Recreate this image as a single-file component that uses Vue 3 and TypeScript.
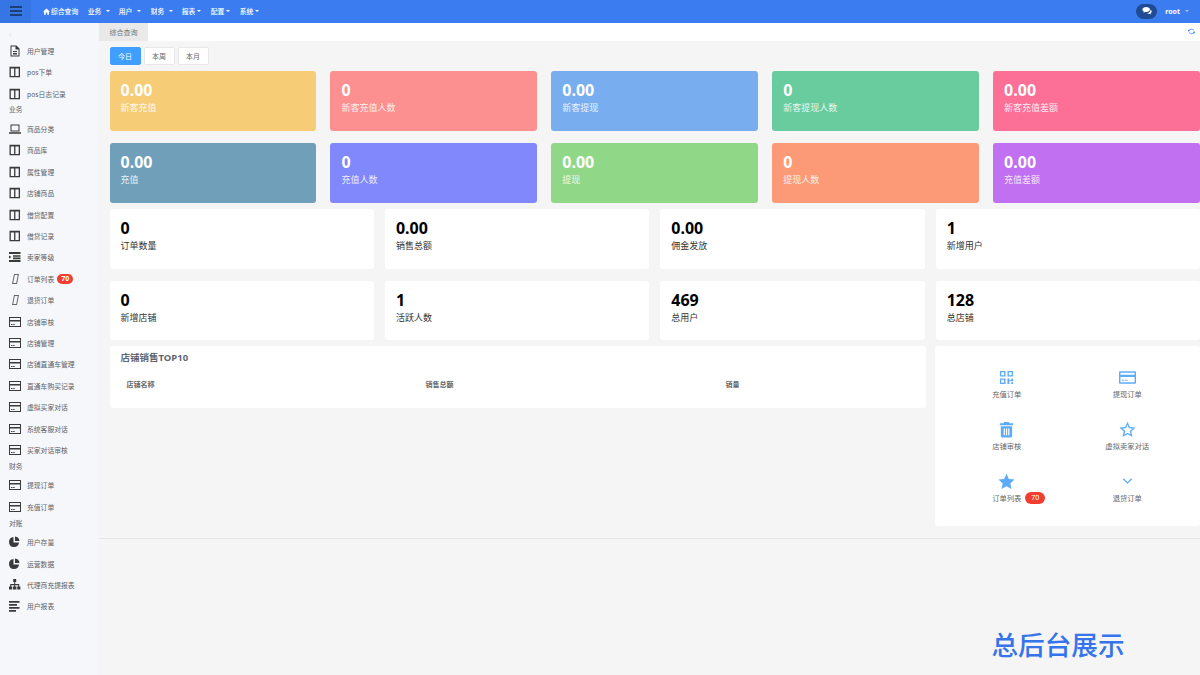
<template>
  <div class="page">
    <header class="topbar">
      <div class="burger">
        <svg width="12" height="10" viewBox="0 0 12 10"><path d="M0 0h12v2H0zM0 4h12v2H0zM0 8h12v2H0z" fill="#1d3f73" /></svg>
      </div>
      <nav class="topnav">
        <span class="nav-link home">
          <svg width="7" height="7" viewBox="0 0 10 10"><path d="M5 .8 0 5.2h1.500V9.500h2.500V6.500h2v3h2.500V5.200H10z" fill="#fff" /></svg>
          综合查询
        </span>
        <span v-for="n in navs" :key="n.label" class="nav-link" :style="{ width: n.width + 'px' }">{{ n.label }}<i class="caret" :style="{ marginLeft: n.caret + 'px' }"></i></span>
      </nav>
      <div class="user">
        <span class="chat">
          <svg width="10" height="8" viewBox="0 0 12 10"><path d="M5 0c2.700 0 4.700 1.400 4.700 3.200S7.700 6.400 5 6.400c-.5 0-1 0-1.400-.2L1.500 7.200l.5-1.600C.8 5 .2 4.200.2 3.200.2 1.400 2.300 0 5 0zM10.300 3.500c1 .5 1.600 1.300 1.600 2.200 0 .9-.5 1.600-1.400 2.100l.4 1.500-1.900-1c-1.200.2-2.400 0-3.300-.5 2.500-.1 4.600-1.700 4.600-3.800z" fill="#fff" /></svg>
        </span>
        <span class="uname">root</span>
        <i class="caret dim"></i>
      </div>
    </header>

    <div class="body">
      <aside class="sidebar">
        <div class="collapse">‹</div>
        <template v-for="m in menu" :key="m.label">
          <div v-if="m.section" class="section">{{ m.label }}</div>
          <div v-else class="menu-item">
            <svg class="menu-icon" width="14" height="12" viewBox="0 0 14 12">
              <path :d="icons[m.icon as string]" :fill="m.icon === 'tilt' ? '#666' : '#3a3a3a'" fill-rule="evenodd" />
            </svg>
            <span>{{ m.label }}</span>
            <em v-if="m.badge" class="side-badge">{{ m.badge }}</em>
          </div>
        </template>
      </aside>

      <main class="main">
        <div class="tabbar">
          <span class="tab">综合查询</span>
          <svg class="refresh" width="7" height="7" viewBox="0 0 10 10"><path d="M8.600 3.400A4 4 0 0 0 1.500 3L.2 2.200V5.500L3 4 2.200 3.500a3.100 3.100 0 0 1 5.500.3zM1.400 6.600a4 4 0 0 0 7.100.4l1.300.8V4.500L7 6l.8.500a3.100 3.100 0 0 1-5.500-.3z" fill="#3f87f5" /></svg>
        </div>

        <div class="content">
          <div class="ranges">
            <button class="range active">今日</button>
            <button class="range">本周</button>
            <button class="range">本月</button>
          </div>

          <div class="color-grid">
            <div v-for="c in colorCards" :key="c.label" class="color-card" :style="{ background: c.color }">
              <b>{{ c.value }}</b>
              <span>{{ c.label }}</span>
            </div>
          </div>

          <div class="white-grid">
            <div v-for="c in whiteCards" :key="c.label" class="white-card">
              <b>{{ c.value }}</b>
              <span>{{ c.label }}</span>
            </div>
          </div>

          <div class="bottom">
            <section class="top10">
              <h3>店铺销售TOP10</h3>
              <div class="thead">
                <span>店铺名称</span>
                <span>销售总额</span>
                <span>销量</span>
              </div>
            </section>
            <section class="quick">
              <div v-for="q in quick" :key="q.label" class="quick-item">
                <svg width="17" height="17" viewBox="0 0 18 18" class="quick-icon">
                  <path :d="quickIcons[q.icon]" fill="#5dabfb" fill-rule="evenodd" />
                </svg>
                <div class="quick-label">
                  {{ q.label }}<em v-if="q.badge" class="quick-badge">{{ q.badge }}</em>
                </div>
              </div>
            </section>
          </div>
        </div>

        <footer class="foot">总后台展示</footer>
      </main>
    </div>
  </div>
</template>

<script setup lang="ts">
type MenuRow = { label: string; icon?: string; section?: boolean; badge?: number };

const navs = [
  { label: "业务", width: 31, caret: 5 },
  { label: "用户", width: 32, caret: 5 },
  { label: "财务", width: 31, caret: 5 },
  { label: "报表", width: 29, caret: 2 },
  { label: "配置", width: 29, caret: 2 },
  { label: "系统", width: 29, caret: 2 },
];

const icons: Record<string, string> = {
  file: "M1.500 .5h6l3 3V11.500h-9zM2.500 1.500v9h7V4.500h-3v-3zM4 6h4v1H4zM4 8h4v1.500H4z",
  cols: "M.5 .8h10.500v10.500H.5zM1.800 2.500v7.500h3.300V2.500zM6.400 2.500v7.500h3.300V2.500z",
  laptop: "M1.500 1.500h9v7h-9zM2.500 2.500v5h7v-5zM0 9.200h12v1.500H0z",
  list: "M0 1h11.500v2H0zM4 4.200h7.500v1.600H4zM4 6.600h7.500v1.600H4zM0 9h11.500v2H0zM0 4.500l2.500 1.500L0 7.500z",
  tilt: "M5 1h5L8 11H3zM5.800 2 4.200 10h3l1.600-8z",
  card: "M0 1h12v10H0zM1 2v2h10V2zM1 5.500V10h10V5.500zM2 8h1.500v1H2zM4.200 8h1.500v1H4.200z",
  pie: "M4.500 1v5.500H10A5 5 0 1 1 4.500 1zM6 .5A5 5 0 0 1 10.500 5H6z",
  tree: "M4.200 0h3v3h-1v2h4v2.500h1.200v3H8.200v-3h1V6.200H6.200v1.300h1.200v3H4v-3h1.200V6.200H2.200v1.300h1v3H0v-3h1.200V5h4V3h-1z",
  lines: "M0 1h10.500v1.800H0zM0 4h8v1.800H0zM0 7h10.500v1.800H0zM0 10h7v1.800H0z",
};

const row = (icon: string, labels: string[]): MenuRow[] => labels.map((label) => ({ label, icon }));

const menu: MenuRow[] = [
  { label: "用户管理", icon: "file" },
  ...row("cols", ["pos下单", "pos日志记录"]),
  { label: "业务", section: true },
  { label: "商品分类", icon: "laptop" },
  ...row("cols", ["商品库", "属性管理", "店铺商品", "借贷配置", "借贷记录"]),
  { label: "卖家等级", icon: "list" },
  { label: "订单列表", icon: "tilt", badge: 70 },
  { label: "退货订单", icon: "tilt" },
  ...row("card", ["店铺审核", "店铺管理", "店铺直通车管理", "直通车购买记录", "虚拟买家对话", "系统客服对话", "买家对话审核"]),
  { label: "财务", section: true },
  ...row("card", ["提现订单", "充值订单"]),
  { label: "对账", section: true },
  ...row("pie", ["用户存量", "运营数据"]),
  { label: "代理商充提报表", icon: "tree" },
  { label: "用户报表", icon: "lines" },
];

const colorCards = [
  { value: "0.00", label: "新客充值", color: "#f6cd76" },
  { value: "0", label: "新客充值人数", color: "#fc8f8f" },
  { value: "0.00", label: "新客提现", color: "#78aef0" },
  { value: "0", label: "新客提现人数", color: "#68cc9e" },
  { value: "0.00", label: "新客充值差额", color: "#fc7098" },
  { value: "0.00", label: "充值", color: "#6f9fb9" },
  { value: "0", label: "充值人数", color: "#8088fc" },
  { value: "0.00", label: "提现", color: "#90d888" },
  { value: "0", label: "提现人数", color: "#fc9a78" },
  { value: "0.00", label: "充值差额", color: "#c070f0" },
];

const whiteCards = [
  { value: "0", label: "订单数量" },
  { value: "0.00", label: "销售总额" },
  { value: "0.00", label: "佣金发放" },
  { value: "1", label: "新增用户" },
  { value: "0", label: "新增店铺" },
  { value: "1", label: "活跃人数" },
  { value: "469", label: "总用户" },
  { value: "128", label: "总店铺" },
];

const quickIcons: Record<string, string> = {
  qr: "M2 2h6v6H2zM3.500 3.500v3h3v-3zM10 2h6v6h-6zM11.500 3.500v3h3v-3zM2 10h6v6H2zM3.500 11.500v3h3v-3zM10 10h2v2h2v-2h2v3h-4v3h-2zM14 14h2v2h-2z",
  card: "M1 2.500h16a1 1 0 0 1 1 1v11a1 1 0 0 1-1 1H1a1 1 0 0 1-1-1v-11a1 1 0 0 1 1-1zM1.500 4v2h15V4zM1.500 8.500V14h15V8.500zM3 11.500h2.500v1H3zM6.500 11.500H9v1H6.500z",
  trash: "M6.500 1h5l.5 1.500h4V4.500H2V2.500h4zM3 5.500h12V16a1.500 1.500 0 0 1-1.500 1.500h-9A1.500 1.500 0 0 1 3 16zM6 8v7h1.300V8zM8.400 8v7h1.300V8zM10.800 8v7h1.300V8z",
  starO: "M9 .8l2.500 5.500 6 .7-4.500 4 1.300 5.900L9 14l-5.300 2.900L5 11 .5 7l6-.7zM9 4 7.500 7.600l-3.800.4 2.900 2.600-.8 3.800L9 12.500l3.200 1.900-.8-3.800 2.900-2.600-3.800-.4z",
  star: "M9 .8l2.500 5.500 6 .7-4.500 4 1.300 5.900L9 14l-5.300 2.900L5 11 .5 7l6-.7z",
  down: "M4 6.500 5 5.500 9 9.500 13 5.500 14 6.500 9 11.500z",
};

const quick = [
  { label: "充值订单", icon: "qr" },
  { label: "提现订单", icon: "card" },
  { label: "店铺审核", icon: "trash" },
  { label: "虚拟卖家对话", icon: "starO" },
  { label: "订单列表", icon: "star", badge: 70 },
  { label: "退货订单", icon: "down" },
];
</script>

<style>
html,
body {
  margin: 0;
  background: #f5f5f5;
}
</style>

<style scoped>
.page {
  width: 1200px;
  height: 675px;
  overflow: hidden;
  display: flex;
  flex-direction: column;
  font-family: "Noto Sans", "Noto Sans CJK SC", sans-serif;
  color: #606266;
}

.topbar {
  height: 22.5px;
  flex: none;
  display: flex;
  align-items: center;
  background: #3b7df1;
  color: #fff;
}

.burger {
  width: 31px;
  height: 100%;
  display: flex;
  align-items: center;
  justify-content: center;
  background: #3675e4;
}

.topnav {
  display: flex;
  align-items: center;
  margin-left: 12px;
  font-size: 6.800px;
  font-weight: 500;
}

.nav-link {
  display: flex;
  align-items: center;
}

.home {
  margin-right: 9.500px;
  gap: 1px;
}

.caret {
  width: 0;
  height: 0;
  border-left: 2px solid transparent;
  border-right: 2px solid transparent;
  border-top: 2.500px solid #fff;
}

.caret.dim {
  border-top-color: #a9c6f8;
}

.user {
  margin-left: auto;
  margin-right: 11px;
  display: flex;
  align-items: center;
}

.chat {
  width: 21px;
  height: 15px;
  border-radius: 8px;
  background: #1f4a94;
  display: flex;
  align-items: center;
  justify-content: center;
}

.uname {
  margin: 0 5px 0 8px;
  font-size: 7px;
  font-weight: 700;
}

.body {
  flex: 1;
  display: flex;
  min-height: 0;
}

.sidebar {
  width: 99px;
  flex: none;
  background: #f5f7fa;
  padding-left: 9px;
  box-sizing: border-box;
  font-size: 6.800px;
}

.collapse {
  height: 17.500px;
  line-height: 23px;
  font-size: 7px;
  color: #d8d8d8;
}

.menu-item {
  height: 21.420px;
  display: flex;
  align-items: center;
  white-space: nowrap;
}

.menu-icon {
  flex: none;
  margin-right: 4px;
}

.section {
  height: 14px;
  line-height: 12px;
}

.side-badge {
  margin-left: 3px;
  min-width: 16px;
  height: 10px;
  line-height: 10px;
  border-radius: 5px;
  background: #f03f2e;
  color: #fff;
  font-style: normal;
  font-weight: 700;
  text-align: center;
  font-size: 7px;
}

.main {
  flex: 1;
  min-width: 0;
  display: flex;
  flex-direction: column;
}

.tabbar {
  height: 18.500px;
  flex: none;
  background: #fff;
  display: flex;
  align-items: center;
  justify-content: space-between;
}

.tab {
  width: 49px;
  height: 100%;
  background: #e9e9e9;
  font-size: 7px;
  color: #777;
  display: flex;
  align-items: center;
  justify-content: center;
}

.refresh {
  margin-right: 5px;
}

.content {
  padding: 5.500px 0 12px 10.500px;
  border-bottom: 1px solid #e6e6e6;
}

.ranges {
  display: flex;
  gap: 3px;
  margin-bottom: 6px;
}

.range {
  width: 31px;
  height: 18.500px;
  padding: 0;
  border: 1px solid #e8e8e8;
  border-radius: 2px;
  background: #fff;
  color: #666;
  font: inherit;
  font-size: 7px;
}

.range.active {
  background: #409eff;
  border-color: #409eff;
  color: #fff;
}

.color-grid {
  display: grid;
  grid-template-columns: repeat(5, 1fr);
  gap: 12px 14px;
}

.color-card {
  height: 60px;
  border-radius: 3px;
  padding: 9px 0 0 11px;
  box-sizing: border-box;
  color: #fff;
}

.color-card b,
.white-card b {
  display: block;
  font-size: 16px;
  line-height: 20px;
}

.color-card span,
.white-card span {
  display: block;
  margin-top: 1px;
  font-size: 9px;
  line-height: 14px;
  opacity: 0.85;
}

.white-grid {
  margin-top: 6px;
  display: grid;
  grid-template-columns: repeat(4, 1fr);
  gap: 12px 11px;
}

.white-card {
  height: 59.500px;
  border-radius: 3px;
  background: #fff;
  padding: 9px 0 0 11px;
  box-sizing: border-box;
  color: #000;
}

.white-card span {
  color: #333;
  opacity: 1;
}

.bottom {
  margin-top: 6px;
  display: grid;
  grid-template-columns: 816px 265px;
  gap: 9px;
  align-items: start;
}

.top10 {
  height: 62px;
  border-radius: 3px;
  background: #fff;
  padding: 5px 11px 0;
  box-sizing: border-box;
}

.top10 h3 {
  margin: 0;
  font-size: 9.500px;
  line-height: 13px;
  font-weight: 700;
  color: #5f6672;
}

.thead {
  margin-top: 15px;
  padding-left: 6px;
  display: grid;
  grid-template-columns: 299px 300px 1fr;
  font-size: 7px;
  font-weight: 700;
  color: #666;
}

.quick {
  height: 180px;
  border-radius: 3px;
  background: #fff;
  padding: 23px 12px 0 12px;
  box-sizing: border-box;
  display: grid;
  grid-template-columns: 1fr 1fr;
  grid-auto-rows: 52px;
  justify-items: center;
}

.quick-item {
  display: flex;
  flex-direction: column;
  align-items: center;
  position: relative;
}

.quick-icon {
  display: block;
}

.quick-label {
  margin-top: 3px;
  font-size: 7.300px;
  line-height: 10px;
  color: #666;
  position: relative;
}

.quick-badge {
  position: absolute;
  left: 100%;
  top: -1px;
  margin-left: 4px;
  width: 20px;
  height: 12px;
  line-height: 12px;
  border-radius: 6px;
  background: #f03f2e;
  color: #fff;
  font-style: normal;
  font-size: 7px;
  text-align: center;
}

.foot {
  flex: 1;
  display: flex;
  justify-content: flex-end;
  align-items: flex-start;
  padding: 87px 75.500px 0 0;
  font-size: 26.600px;
  line-height: 38px;
  font-weight: 500;
  color: #3574ea;
}
</style>
